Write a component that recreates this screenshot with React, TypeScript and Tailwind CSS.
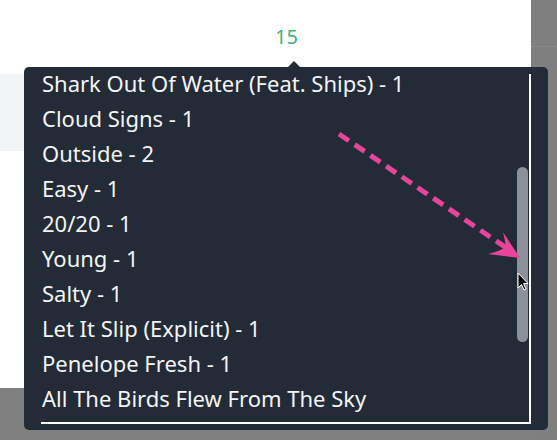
const songs = [
  "Shark Out Of Water (Feat. Ships) - 1",
  "Cloud Signs - 1",
  "Outside - 2",
  "Easy - 1",
  "20/20 - 1",
  "Young - 1",
  "Salty - 1",
  "Let It Slip (Explicit) - 1",
  "Penelope Fresh - 1",
  "All The Birds Flew From The Sky",
];

const App = () => {
  return (
    <div
      className="relative w-[557px] h-[440px] overflow-hidden bg-[#808080]"
      style={{ fontFamily: '"Noto Sans", Lato, sans-serif' }}
    >
      <div className="flex">
        {/* page card */}
        <div className="w-[531px] h-[388px] bg-white flex flex-col">
          <div className="h-[74px] pl-[275px] pt-[22px] text-[20px] leading-[30px] text-[#3bb57c]">
            15
          </div>
          <div className="h-[77px] bg-[#f3f4f6]" />
        </div>
        {/* right grey strip */}
        <div className="flex-1 h-[440px] bg-[#7f7f7f] pt-[46px]">
          <div className="border-t border-dashed border-[#8e8e8e]" />
        </div>
      </div>

      {/* tooltip */}
      <div className="absolute left-[24px] top-[67px] w-[524px] h-[363px] rounded-[5px] bg-[#222b36] flex flex-col">
        <div className="absolute left-1/2 -top-[6px] ml-[1px] w-0 h-0 border-l-[7px] border-r-[7px] border-b-[7px] border-l-transparent border-r-transparent border-b-[#222b36]" />
        <div className="relative flex flex-col ml-[17px] mt-[7px] w-[490px] h-[350px] border-r-2 border-b-2 border-white">
          <ul className="-mt-[8.5px] text-[22px] leading-[20px] text-[#f3f4f6]">
            {songs.map((s) => (
              <li key={s} className="py-[7.5px] pl-[1px] whitespace-nowrap">
                {s}
              </li>
            ))}
          </ul>
          <div className="absolute right-[1px] top-[93px] w-[11px] h-[175px] rounded-full bg-[#8b9099]" />
        </div>
      </div>

      {/* annotation arrow */}
      <svg className="absolute left-0 top-0" width="557" height="440">
        <line
          x1="339"
          y1="134"
          x2="508"
          y2="249"
          stroke="#e9449b"
          strokeWidth="5"
          strokeDasharray="12 7"
        />
        <path d="M520 258 L488 254 Q500 251 506 247 Q505 240 503 232 Z" fill="#e9449b" />
        <path
          d="M518 273 L518 288 L521.5 284.5 L524 290 L526 289 L523.5 283.5 L528 283.5 Z"
          fill="#000"
          stroke="#fff"
          strokeWidth="1"
        />
      </svg>
    </div>
  );
};

export default App;
